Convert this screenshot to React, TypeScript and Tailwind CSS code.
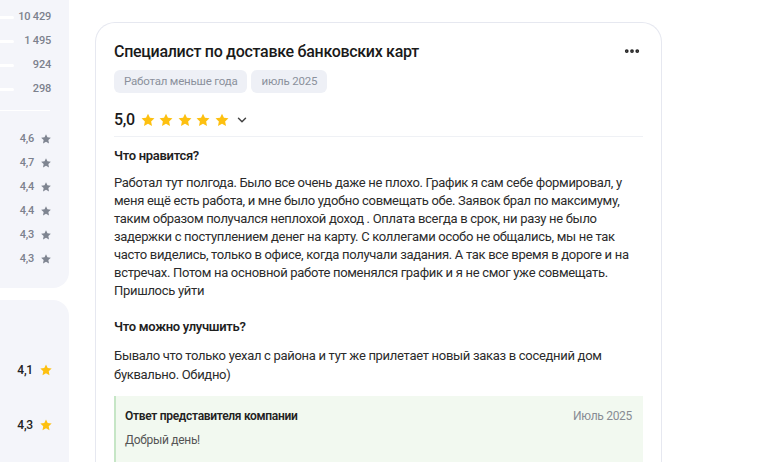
import { MoreHorizontal, ChevronDown } from "lucide-react";

const counts = ["10 429", "1 495", "924", "298"];
const grades = ["4,6", "4,7", "4,4", "4,4", "4,3", "4,3"];

const Star: React.FC<{ className?: string }> = ({ className }) => (
  <svg viewBox="0 0 24 24" className={className} fill="currentColor">
    <path d="M12 2.5l2.9 6.2 6.8.8-5 4.7 1.3 6.7L12 17.6l-6 3.3 1.3-6.7-5-4.7 6.8-.8z" />
  </svg>
);

const Tag: React.FC<{ children: React.ReactNode }> = ({ children }) => (
  <span className="inline-flex items-center h-[23px] rounded-md bg-[#eef0f6] px-[10px] text-[11.5px] tracking-[-0.2px] text-[#8b909c]">
    {children}
  </span>
);

const Sidebar = () => (
  <div className="flex w-[69px] shrink-0 flex-col gap-3 tracking-[-0.2px]">
    <div className="rounded-br-2xl bg-[#f4f5fa] pt-[5px] pb-[17px]">
      {counts.map((c) => (
        <div key={c} className="flex h-6 items-center justify-between pr-[18px]">
          <div className="h-[3px] w-[14px] rounded-r bg-white" />
          <span className="text-[11px] font-medium text-[#7c818d]">{c}</span>
        </div>
      ))}
      <div className="mt-[9px] mr-[19px] h-px bg-white" />
      <div className="pt-[16px]">
        {grades.map((g, i) => (
          <div key={i} className="flex h-6 items-center justify-end gap-[6px] pr-[17px]">
            <span className="text-[11px] font-medium text-[#7c818d]">{g}</span>
            <Star className="h-[12px] w-[12px] text-[#7f8591]" />
          </div>
        ))}
      </div>
    </div>
    <div className="flex-1 rounded-tr-2xl bg-[#f4f5fa] pt-[58px]">
      <div className="flex h-6 items-center justify-end gap-[6px] pr-[16px]">
        <span className="text-[12px] font-medium text-[#222]">4,1</span>
        <Star className="h-[14px] w-[14px] text-[#fdc010]" />
      </div>
      <div className="mt-[31px] flex h-6 items-center justify-end gap-[6px] pr-[16px]">
        <span className="text-[12px] font-medium text-[#222]">4,3</span>
        <Star className="h-[14px] w-[14px] text-[#fdc010]" />
      </div>
    </div>
  </div>
);

const ReviewCard = () => (
  <div className="ml-[26px] mt-[22px] w-[567px] shrink-0 rounded-t-[20px] border border-b-0 border-[#e6e8f0] bg-white px-[18px] pt-[17px] tracking-[-0.3px]">
    <div className="flex items-center justify-between">
      <h2 className="text-[16px] leading-6 font-medium text-[#1a1a1a]">
        Специалист по доставке банковских карт
      </h2>
      <MoreHorizontal className="mr-[2px] -mt-[3px] h-[18px] w-[18px] text-[#222]" strokeWidth={3} />
    </div>
    <div className="mt-[6px] flex gap-1">
      <Tag>Работал меньше года</Tag>
      <Tag>июль 2025</Tag>
    </div>
    <div className="mt-[15px] flex h-6 items-center">
      <span className="mr-[5px] text-[16px] font-medium text-[#1a1a1a]">5,0</span>
      <div className="flex gap-[2.5px]">
        {[0, 1, 2, 3, 4].map((i) => (
          <Star key={i} className="h-[16px] w-[16px] text-[#fdc010]" />
        ))}
      </div>
      <ChevronDown className="ml-[5px] h-[14px] w-[14px] text-[#444]" strokeWidth={2.5} />
    </div>
    <div className="mt-[4px] h-px bg-[#eff1f5]" />
    <h3 className="mt-[10px] text-[13px] leading-[18px] font-semibold text-[#1f1f1f]">Что нравится?</h3>
    <p className="mt-[9px] w-[520px] text-[13px] leading-[18px] text-[#2b2b2b]">
      Работал тут полгода. Было все очень даже не плохо. График я сам себе формировал, у меня ещё есть
      работа, и мне было удобно совмещать обе. Заявок брал по максимуму, таким образом получался неплохой
      доход . Оплата всегда в срок, ни разу не было задержки с поступлением денег на карту. С коллегами
      особо не общались, мы не так часто виделись, только в офисе, когда получали задания. А так все время в
      дороге и на встречах. Потом на основной работе поменялся график и я не смог уже совмещать. Пришлось уйти
    </p>
    <h3 className="mt-[18px] text-[13px] leading-[18px] font-semibold text-[#1f1f1f]">Что можно улучшить?</h3>
    <p className="mt-[10px] w-[520px] text-[13px] leading-[19px] text-[#2b2b2b]">
      Бывало что только уехал с района и тут же прилетает новый заказ в соседний дом буквально. Обидно)
    </p>
    <div className="mt-[12px] h-[80px] border-l-2 border-[#c6e6c6] bg-[#f2f9f0] pl-[9px] pr-[11px] pt-[12px]">
      <div className="flex items-center justify-between">
        <span className="text-[12px] leading-4 font-semibold text-[#222]">Ответ представителя компании</span>
        <span className="text-[12px] leading-4 text-[#888c94]">Июль 2025</span>
      </div>
      <p className="mt-[8px] text-[12px] leading-4 text-[#555]">Добрый день!</p>
    </div>
  </div>
);

export default function App() {
  return (
    <div
      className="flex h-[462px] w-[768px] overflow-hidden bg-white"
      style={{ fontFamily: "Roboto, 'Noto Sans', sans-serif" }}
    >
      <Sidebar />
      <ReviewCard />
    </div>
  );
}
